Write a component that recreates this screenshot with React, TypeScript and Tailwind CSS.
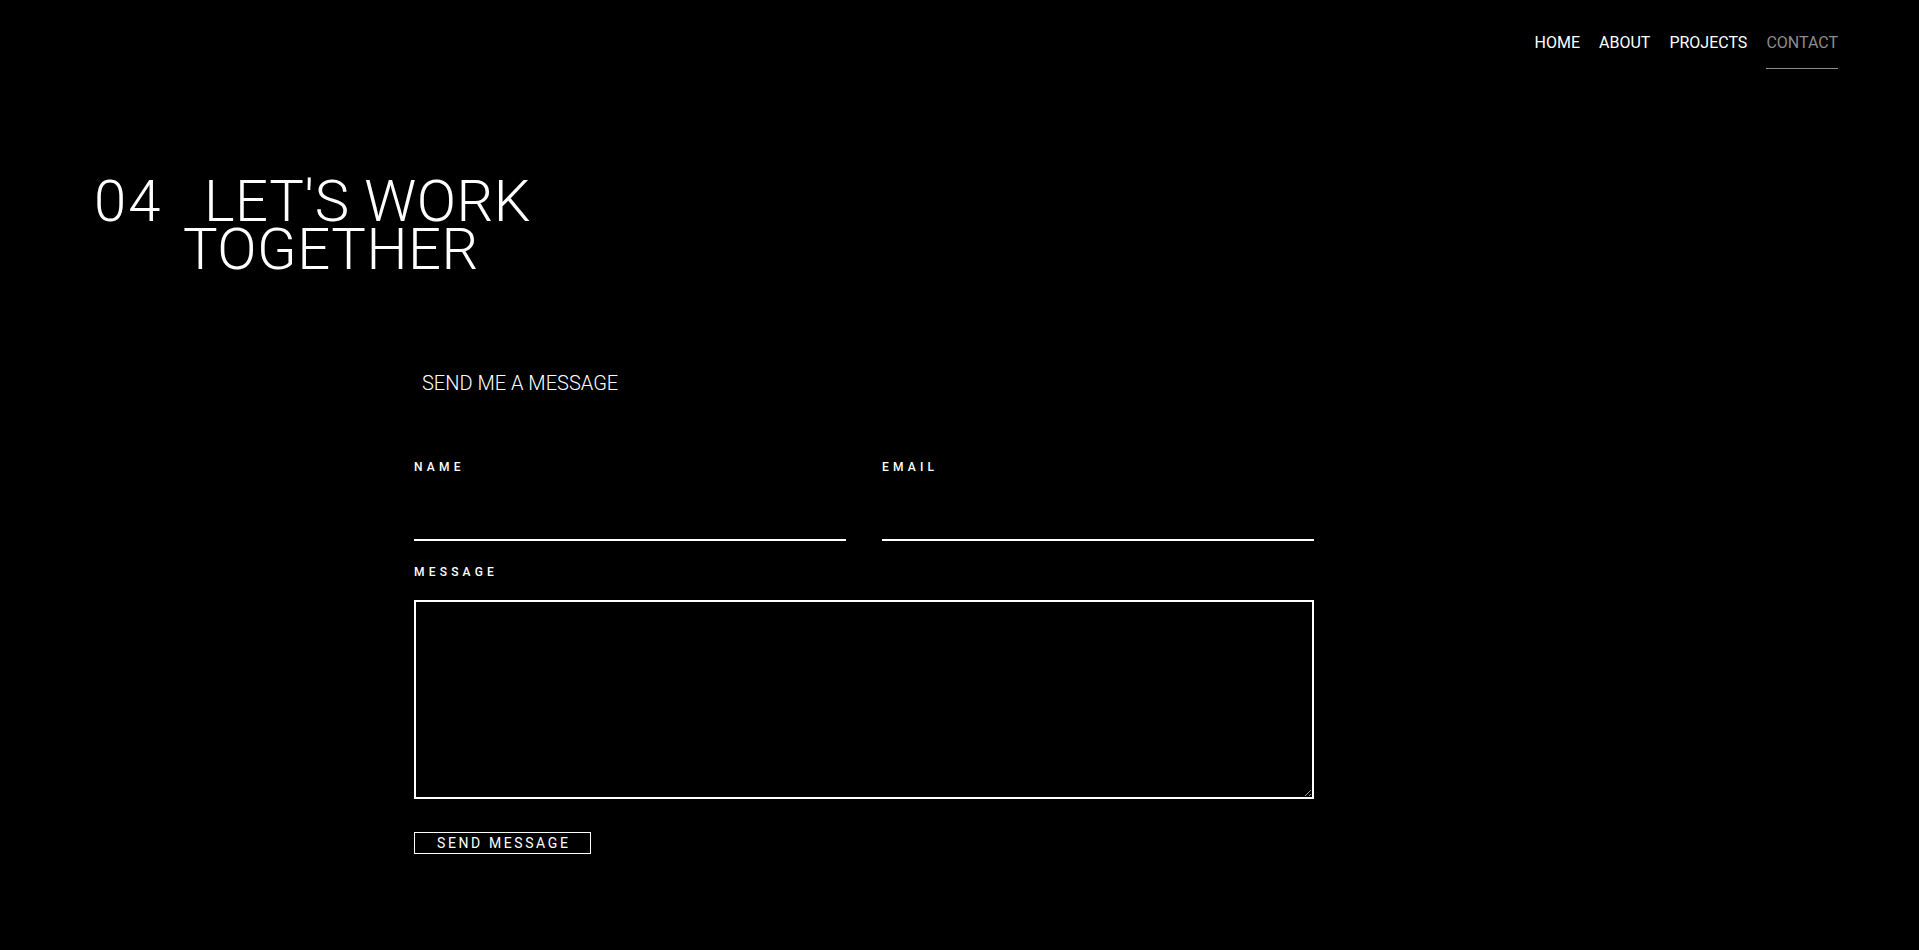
const navLinks = [
  { label: 'HOME', active: false },
  { label: 'ABOUT', active: false },
  { label: 'PROJECTS', active: false },
  { label: 'CONTACT', active: true },
];

export default function App() {
  return (
    <div className="min-h-screen bg-black text-white font-['Roboto',sans-serif]">
      {/* Nav */}
      <nav className="flex justify-end gap-[19px] pt-[31px] pr-[81px]">
        {navLinks.map((link) => (
          <a
            key={link.label}
            href="#"
            className={
              link.active
                ? 'pb-[13px] border-b border-[#8c8c8c] text-[16px] leading-6 font-normal text-[#8c8c8c]'
                : 'pb-[13px] text-[16px] leading-6 font-normal text-white'
            }
          >
            {link.label}
          </a>
        ))}
      </nav>

      {/* Heading */}
      <div className="flex pl-[94px] mt-[108px] text-[58px] leading-[48px] font-light tracking-[0.5px]">
        <span className="w-[89px] shrink-0 tracking-[2px]">04</span>
        <h1 className="indent-[21px]">
          LET'S WORK
          <br />
          TOGETHER
        </h1>
      </div>

      {/* Form */}
      <form className="ml-[414px] w-[900px] mt-[96px]" onSubmit={(e) => e.preventDefault()}>
        <h2 className="pl-[8px] text-[20px] leading-7 font-light">SEND ME A MESSAGE</h2>

        <div className="grid grid-cols-2 gap-[36px] mt-[62px]">
          <label className="flex flex-col">
            <span className="text-[12px] leading-4 font-medium tracking-[0.35em]">NAME</span>
            <input
              type="text"
              className="mt-[14px] h-[52px] bg-transparent border-b-2 border-white outline-none text-white"
            />
          </label>
          <label className="flex flex-col">
            <span className="text-[12px] leading-4 font-medium tracking-[0.35em]">EMAIL</span>
            <input
              type="email"
              className="mt-[14px] h-[52px] bg-transparent border-b-2 border-white outline-none text-white"
            />
          </label>
        </div>

        <label className="flex flex-col mt-[23px]">
          <span className="text-[12px] leading-4 font-medium tracking-[0.35em]">MESSAGE</span>
          <textarea className="mt-[20px] h-[199px] bg-black border-2 border-white outline-none text-white p-2" />
        </label>

        <button
          type="submit"
          className="mt-[33px] h-[22px] pl-[22px] pr-[20px] border border-white text-[14px] leading-5 tracking-[2.6px] font-normal"
        >
          SEND MESSAGE
        </button>
      </form>
    </div>
  );
}
